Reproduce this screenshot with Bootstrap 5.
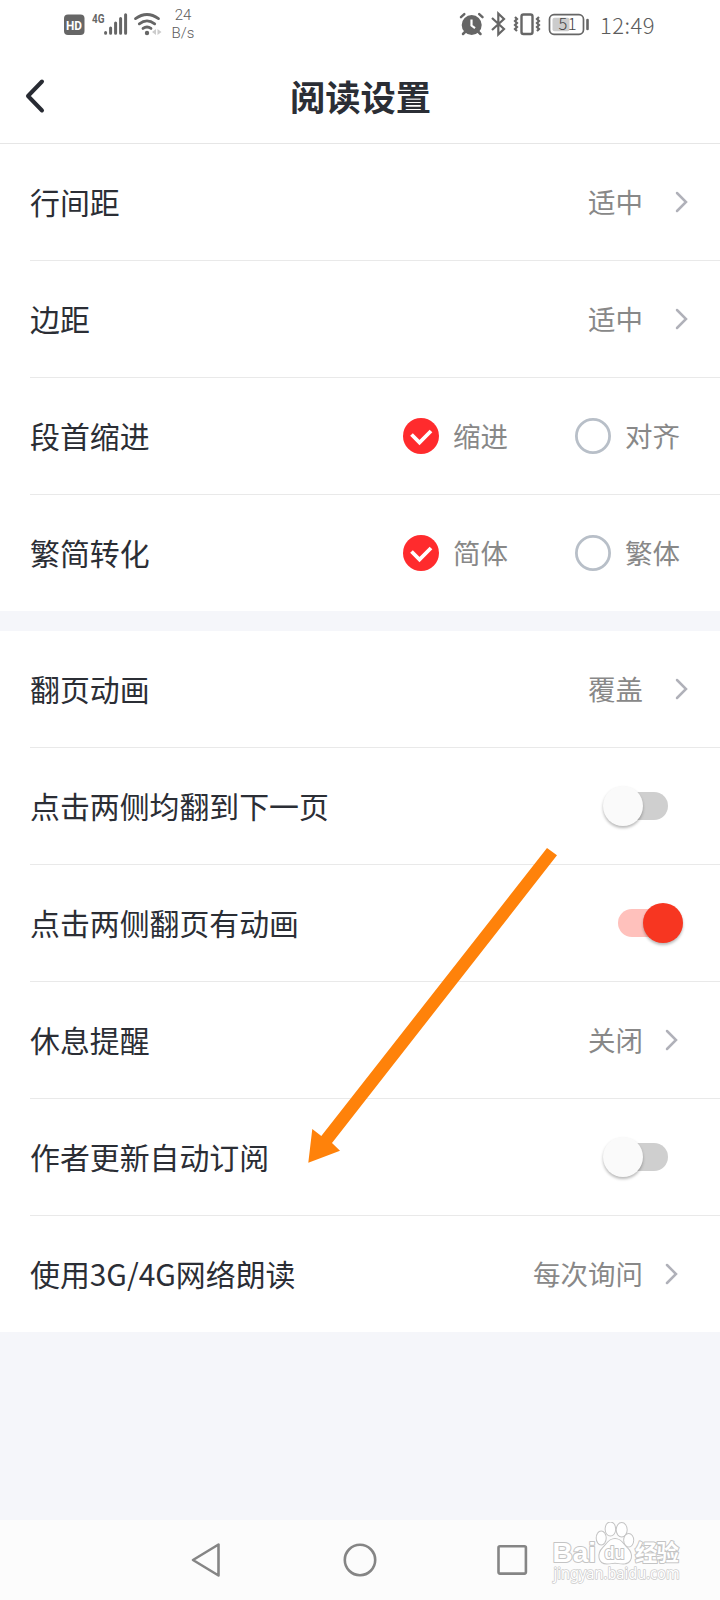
<!DOCTYPE html>
<html lang="zh-CN">
<head>
<meta charset="utf-8">
<meta name="viewport" content="width=device-width, initial-scale=1">
<title>阅读设置</title>
<link rel="stylesheet" href="https://cdn.jsdelivr.net/npm/bootstrap@5.3.0/dist/css/bootstrap.min.css">
<style>
  body { font-family: "Noto Sans CJK SC", "Noto Sans", sans-serif; background: #f5f6fa; color: #2b2e35; }
  .phone { width: 720px; height: 1600px; background: #f5f6fa; }
  .status-bar { height: 48px; color: #5c5c5c; padding-left: 60px; padding-right: 64px; }
  .status-bar svg { flex: none; }
  .net-speed { font: 300 15px/18px Roboto, sans-serif; width: 36px; margin: 6px 0 0 -5px; }
  .clock { font-size: 22px; font-weight: 300; line-height: 48px; letter-spacing: .5px; width: 56px; margin-left: 8px; white-space: nowrap; }
  .title-bar { height: 96px; border-bottom: 1px solid #e6e6e6; }
  .title-bar h1 { font-size: 35.3px; font-weight: 700; line-height: 50px; padding-left: 1px; }
  .back, .back-space { width: 46px; flex: none; }
  .setting { height: 117px; padding: 0; margin-left: 30px; border: 0; border-bottom: 1px solid #e9e9e9; color: inherit; background: transparent; }
  .setting:last-child { height: 116px; border-bottom: 0; }
  .setting-label { font-size: 29.9px; line-height: 44px; white-space: nowrap; padding-bottom: 3px; }
  .setting-value { font-size: 27.5px; line-height: 40px; color: #888; white-space: nowrap; padding-bottom: 3px; }
  .arrow { margin: 0 32px; }
  .arrow-inset { margin: 0 42px 0 22px; }
  .option { width: 172px; gap: 14px; }
  .option:last-child { width: 145px; }
  .dot { width: 36px; height: 36px; flex: none; }
  .toggle { width: 50px; height: 28px; border-radius: 14px; background: #cfcfcf; margin-right: 52px; }
  .toggle span { display: block; width: 40px; height: 40px; border-radius: 50%; margin: -6px 0 0 -15px; background: #fafafa; box-shadow: 0 2px 3px rgba(0,0,0,.28); }
  .toggle.on { background: #ffc1bc; }
  .toggle.on span { margin-left: 25px; background: #f73621; }
  .gap-strip { height: 20px; }
  .nav-bar { height: 80px; background: #fcfcfc; padding-left: 191px; }
  .nav-home { margin: 0 118px 0 121px; }
  .pointer { left: 300px; top: 840px; }
  .watermark { right: 30px; bottom: 8px; }
</style>
</head>
<body>
<main class="phone position-relative d-flex flex-column overflow-hidden">
  <div class="bg-white">
    <div class="status-bar d-flex">
      <svg width="110" height="48" viewBox="60 0 110 48" fill="#666">
        <rect x="64" y="14.5" width="20.5" height="20.5" rx="4"/>
        <text x="66" y="30" font-family="Roboto" font-weight="700" font-size="13" textLength="16" lengthAdjust="spacingAndGlyphs" fill="#fff">HD</text>
        <text x="92" y="23" font-family="Roboto" font-weight="700" font-size="13" textLength="12.5" lengthAdjust="spacingAndGlyphs">4G</text>
        <path d="M105.600 32.500v.8M110.600 28v5.300M115.600 23v10.300M120.600 18.500v14.800M125.600 14.800v18.500" stroke="#666" stroke-width="3" stroke-linecap="round"/>
        <g fill="none" stroke="#666" stroke-width="2.800" stroke-linecap="round"><path d="M135.500 18.600q11.500-8.200 23 0M139.300 23.800q7.700-5.800 15.400 0M143 28.400q4-2.900 8 0"/></g>
        <circle cx="147" cy="33" r="2.200"/>
        <path d="M152 32l4-3v6zM161.500 32l-4-3v6z" fill="#ccc"/>
      </svg>
      <div class="net-speed text-center">24<br>B/s</div>
      <svg class="ms-auto" width="135" height="48" viewBox="457 0 135 48" fill="none" stroke="#666">
        <circle cx="471.700" cy="25" r="10" fill="#666" stroke="none"/>
        <path d="M461 17.200l3.300-3M482.500 17.200l-3.300-3M465.500 31.500l-2.500 2.500M478 31.500l2.500 2.500" stroke-width="2.500" stroke-linecap="round"/>
        <path d="M471.500 19.500v6l3.500 2.700" stroke="#fff" stroke-width="2.200"/>
        <path d="M492 18l12 11-5.700 5.500v-21L504 19l-12 11" stroke-width="2.200"/>
        <rect x="521.500" y="14.500" width="11" height="19.500" rx="2" stroke-width="2.400"/>
        <path d="M515 17l2 2-2 2 2 2-2 2 2 2-2 2 2 2M539 17l-2 2 2 2-2 2 2 2-2 2 2 2-2 2" stroke-width="2.200"/>
        <rect x="549.500" y="14.700" width="34" height="19.600" rx="4.500" stroke-width="1.700"/>
        <rect x="552.500" y="17.700" width="17" height="13.600" rx="2" fill="#ccc" stroke="none"/>
        <text x="558.500" y="30.200" font-family="Noto Sans CJK SC" font-weight="300" font-size="16.500" textLength="18" fill="#444" stroke="none">51</text>
        <path d="M587.500 20v9" stroke-width="2.600" stroke-linecap="round"/>
      </svg>
      <time class="clock">12:49</time>
    </div>
    <header class="title-bar d-flex align-items-center">
      <svg class="back" height="36" viewBox="0 0 46 36" fill="none" stroke="#282b33" stroke-width="4" stroke-linecap="round" stroke-linejoin="round"><path d="M42 3.500L28 18l14 14.500"/></svg>
      <h1 class="flex-grow-1 text-center mb-0">阅读设置</h1>
      <span class="back-space"></span>
    </header>
    <section class="list-group list-group-flush">
      <div class="setting d-flex align-items-center"><span class="setting-label me-auto">行间距</span><span class="setting-value">适中</span><svg class="arrow" width="13" height="22" viewBox="0 0 13 22" fill="none" stroke="#b0b1b9" stroke-width="2.500" stroke-linecap="round"><path d="M2 2l9 9-9 9"/></svg></div>
      <div class="setting d-flex align-items-center"><span class="setting-label me-auto">边距</span><span class="setting-value">适中</span><svg class="arrow" width="13" height="22" viewBox="0 0 13 22" fill="none" stroke="#b0b1b9" stroke-width="2.500" stroke-linecap="round"><path d="M2 2l9 9-9 9"/></svg></div>
      <div class="setting d-flex align-items-center"><span class="setting-label me-auto">段首缩进</span>
        <div class="option d-flex align-items-center"><svg class="dot" viewBox="0 0 36 36"><circle cx="18" cy="18" r="18" fill="#ff2b2d"/><path d="M8.500 16.500l8 8 11.500-11.500" fill="none" stroke="#fff" stroke-width="3.800"/></svg><span class="setting-value">缩进</span></div>
        <div class="option d-flex align-items-center"><svg class="dot" viewBox="0 0 36 36"><circle cx="18" cy="18" r="16.600" fill="none" stroke="#b8bfc8" stroke-width="2.800"/></svg><span class="setting-value">对齐</span></div>
      </div>
      <div class="setting d-flex align-items-center"><span class="setting-label me-auto">繁简转化</span>
        <div class="option d-flex align-items-center"><svg class="dot" viewBox="0 0 36 36"><circle cx="18" cy="18" r="18" fill="#ff2b2d"/><path d="M8.500 16.500l8 8 11.500-11.500" fill="none" stroke="#fff" stroke-width="3.800"/></svg><span class="setting-value">简体</span></div>
        <div class="option d-flex align-items-center"><svg class="dot" viewBox="0 0 36 36"><circle cx="18" cy="18" r="16.600" fill="none" stroke="#b8bfc8" stroke-width="2.800"/></svg><span class="setting-value">繁体</span></div>
      </div>
    </section>
  </div>
  <div class="gap-strip"></div>
  <section class="list-group list-group-flush bg-white rounded-0">
    <div class="setting d-flex align-items-center"><span class="setting-label me-auto">翻页动画</span><span class="setting-value">覆盖</span><svg class="arrow" width="13" height="22" viewBox="0 0 13 22" fill="none" stroke="#b0b1b9" stroke-width="2.500" stroke-linecap="round"><path d="M2 2l9 9-9 9"/></svg></div>
    <div class="setting d-flex align-items-center"><span class="setting-label me-auto">点击两侧均翻到下一页</span><div class="toggle"><span></span></div></div>
    <div class="setting d-flex align-items-center"><span class="setting-label me-auto">点击两侧翻页有动画</span><div class="toggle on"><span></span></div></div>
    <div class="setting d-flex align-items-center"><span class="setting-label me-auto">休息提醒</span><span class="setting-value">关闭</span><svg class="arrow-inset" width="13" height="22" viewBox="0 0 13 22" fill="none" stroke="#b0b1b9" stroke-width="2.500" stroke-linecap="round"><path d="M2 2l9 9-9 9"/></svg></div>
    <div class="setting d-flex align-items-center"><span class="setting-label me-auto">作者更新自动订阅</span><div class="toggle"><span></span></div></div>
    <div class="setting d-flex align-items-center"><span class="setting-label me-auto">使用3G/4G网络朗读</span><span class="setting-value">每次询问</span><svg class="arrow-inset" width="13" height="22" viewBox="0 0 13 22" fill="none" stroke="#b0b1b9" stroke-width="2.500" stroke-linecap="round"><path d="M2 2l9 9-9 9"/></svg></div>
  </section>
  <nav class="nav-bar d-flex align-items-center mt-auto" aria-label="系统导航">
    <svg width="31" height="36" viewBox="0 0 31 36" fill="none" stroke="#858585" stroke-width="2.600" stroke-linejoin="round"><path d="M2 18L27.500 2.500v31z"/></svg>
    <svg class="nav-home" width="34" height="36" viewBox="0 0 34 36" fill="none" stroke="#858585" stroke-width="2.600"><circle cx="17" cy="18" r="15.200"/></svg>
    <svg width="34" height="36" viewBox="0 0 34 36" fill="none" stroke="#858585" stroke-width="2.600"><rect x="3.500" y="4.200" width="27.400" height="27.400" rx="1.500"/></svg>
  </nav>

  <!-- callout arrow over the list -->
  <svg class="pointer position-absolute" width="265" height="330" viewBox="300 840 265 330" fill="#ff820a"><path d="M547 848l10 7.300L332 1143l8 7.700-31.700 12 4-33.700 9 7z"/></svg>

  <!-- site mark over the navigation bar -->
  <svg class="watermark position-absolute" width="140" height="70" viewBox="550 1522 140 70" fill="#fff" stroke="#c4c4c4" stroke-width="2" stroke-linejoin="round" paint-order="stroke">
    <g><ellipse cx="601.200" cy="1538" rx="4.500" ry="6.500"/><ellipse cx="610.400" cy="1529" rx="4.800" ry="6.600"/><ellipse cx="621.700" cy="1529.800" rx="5" ry="6.800"/><ellipse cx="628.700" cy="1540.300" rx="4.500" ry="6.300"/>
    <path d="M615 1539c6 0 8 5 12 9 6.500 6 5 15.500-4 15.500-3.500 0-5-.8-8-.8s-4.500.8-8 .8c-8.500 0-10-9.500-4-15.500 4-4 6-9 12-9z"/></g>
    <text x="552.500" y="1561.500" font-family="Liberation Sans" font-weight="700" font-size="28" textLength="43.500" lengthAdjust="spacingAndGlyphs">Bai</text>
    <text x="604.500" y="1559.300" font-family="Liberation Sans" font-weight="700" font-size="18" textLength="20" lengthAdjust="spacingAndGlyphs">du</text>
    <text x="635" y="1561" font-family="Noto Sans CJK SC" font-weight="700" font-size="22.500" textLength="44">经验</text>
    <text x="553.500" y="1579" font-family="Noto Sans" font-size="16" textLength="126" lengthAdjust="spacingAndGlyphs" stroke-width="1.600" stroke="#ccc">jingyan.baidu.com</text>
  </svg>
</main>
<script src="https://cdn.jsdelivr.net/npm/bootstrap@5.3.0/dist/js/bootstrap.bundle.min.js"></script>
</body>
</html>
